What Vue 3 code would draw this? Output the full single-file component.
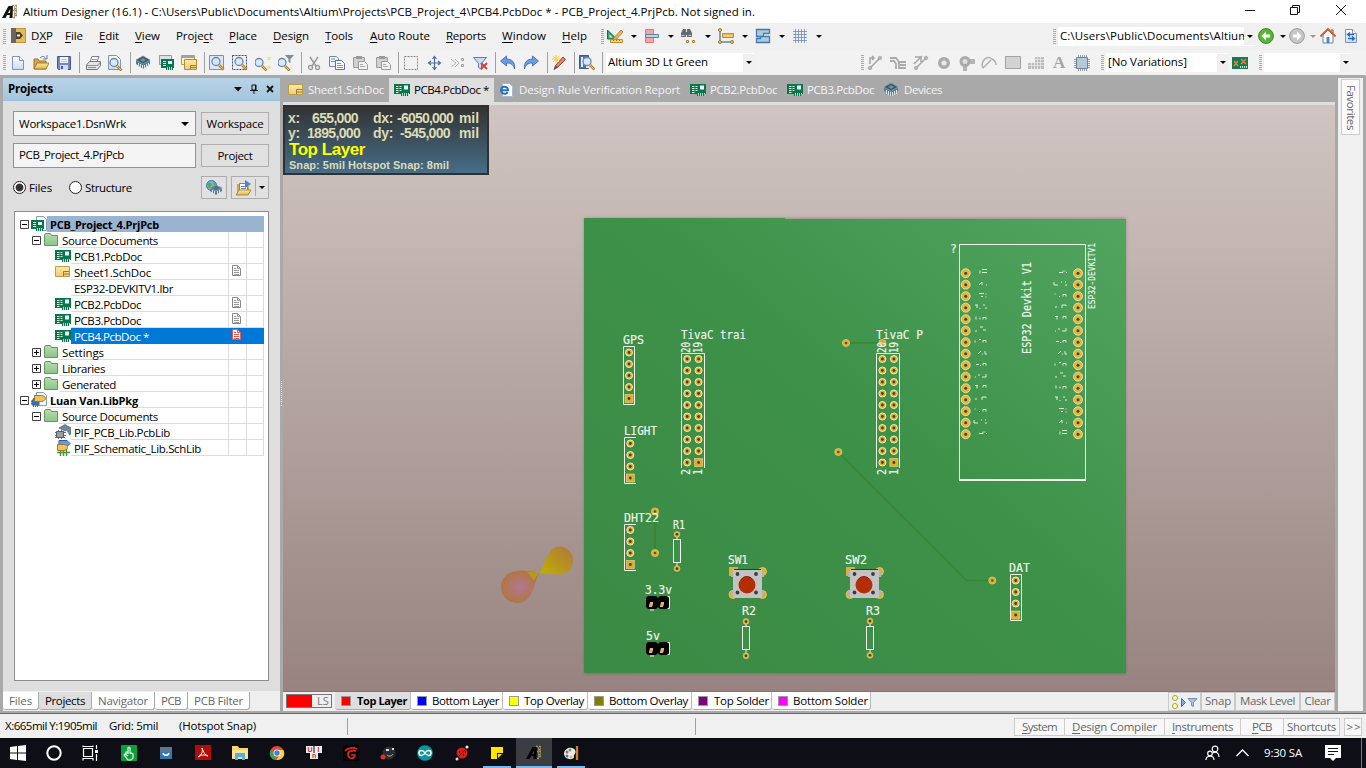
<script setup>
// Each bar lists its items by left edge; a slot is as wide as the distance to the next item.
const row = (items, end = 1366) => {
  const list = items[0].x > 0 ? [{ x: 0 }, ...items] : items
  return list.map((it, i) => ({ ...it, w: (i + 1 < list.length ? list[i + 1].x : end) - it.x, parts: split(it.t || '') }))
}
function split(t) {
  const i = t.indexOf('&')
  return i < 0 ? [t, '', ''] : [t.slice(0, i), t[i + 1], t.slice(i + 2)]
}
// Adjusts tracking so that a label takes its designed length along its writing direction.
const vFit = {
  mounted(el, { value, modifiers }) {
    if (!value) return
    const box = el.getBoundingClientRect()
    const natural = modifiers.vertical ? box.height : box.width
    el.style.letterSpacing = (value - natural) / el.textContent.length + 'px'
  }
}
const ic = (x, icon) => ({ x, icon })
const tx = (x, t, f) => ({ x, t, f })
const sep = x => ({ x, k: 'sep' })
const grip = x => ({ x, k: 'grip' })
const dd = (x, off) => ({ x, k: off ? 'dd off' : 'dd' })
const combo = (x, t, f, cw) => ({ x, k: 'combo', t, f, cw })

const menu = row([
  grip(3), ic(11, 'dxp'), tx(31, 'D&XP', 22), tx(65, '&File', 18), tx(99, '&Edit', 20), tx(135, '&View', 25), tx(176, 'Proje&ct', 37),
  tx(229, '&Place', 28), tx(273, '&Design', 36), tx(325, '&Tools', 28), tx(370, '&Auto Route', 60), tx(446, '&Reports', 40),
  tx(502, '&Window', 44), tx(562, '&Help', 25), grip(601), ic(607, 'draw'), dd(631), ic(644, 'align'), dd(668), ic(681, 'find'), dd(705),
  ic(718, 'dims'), dd(742), ic(755, 'room'), dd(779), ic(792, 'grid'), dd(816), grip(1053),
  combo(1058, 'C:\\Users\\Public\\Documents\\Altium', 189, 197), ic(1258, 'back'), dd(1280), ic(1289, 'fwd'), dd(1310, 1), ic(1320, 'home'), ic(1343, 'sync')
])
const tools = row([
  grip(3), ic(10, 'new'), ic(33, 'open'), ic(56, 'save'), sep(79), ic(85, 'print'), ic(107, 'preview'), sep(130), ic(135, 'chip'), ic(158, 'pcbfile'),
  ic(181, 'sheets'), sep(204), ic(209, 'zoomdoc'), ic(232, 'zoomarea'), ic(255, 'zoompts'), ic(278, 'zoomfilter'), sep(301), ic(306, 'cut'), ic(329, 'copy'),
  ic(352, 'paste'), ic(375, 'paste'), sep(398), ic(403, 'select'), ic(427, 'move'), ic(450, 'desel'), ic(473, 'clearf'), sep(495), ic(500, 'undo'),
  ic(523, 'redo'), sep(547), ic(551, 'wand'), sep(574), ic(579, 'browse'), sep(602), combo(606, 'Altium 3D Lt Green', 100, 148),
  grip(861), ic(867, 'route1'), ic(890, 'route2'), ic(913, 'route3'), ic(936, 'donut'), ic(959, 'via'), ic(981, 'arc'), ic(1005, 'fill'), ic(1028, 'poly'),
  ic(1051, 'bigA'), ic(1074, 'comp'), grip(1101), combo(1106, '[No Variations]', 79, 122), ic(1232, 'variant'), grip(1259), combo(1264, '', 0, 87)
])
const docTabs = [
  { w: 106, icon: 'sch', t: 'Sheet1.SchDoc', f: 76, pad: 5, gap: 4 },
  { w: 105, icon: 'pcb', t: 'PCB4.PcbDoc *', f: 75, pad: 5, gap: 4, on: true },
  { w: 191, icon: 'ie', t: 'Design Rule Verification Report', f: 161, pad: 5, gap: 4 },
  { w: 97, icon: 'pcb', t: 'PCB2.PcbDoc', f: 67, pad: 5, gap: 4 },
  { w: 97, icon: 'pcb', t: 'PCB3.PcbDoc', f: 67, pad: 5, gap: 4 },
  { w: 70, icon: 'chip', t: 'Devices', f: 38, pad: 4, gap: 5 }
]
const tree = [
  { l: 0, e: '-', icon: 'prj', t: 'PCB_Project_4.PrjPcb', f: 109, cls: 'project bold' },
  { l: 1, e: '-', icon: 'folder', t: 'Source Documents', f: 96 },
  { l: 2, icon: 'pcb', t: 'PCB1.PcbDoc', f: 68 },
  { l: 2, icon: 'sch', t: 'Sheet1.SchDoc', f: 77, d: 'doc' },
  { l: 2, t: 'ESP32-DEVKITV1.lbr', f: 99 },
  { l: 2, icon: 'pcb', t: 'PCB2.PcbDoc', f: 67, d: 'doc' },
  { l: 2, icon: 'pcb', t: 'PCB3.PcbDoc', f: 67, d: 'doc' },
  { l: 2, icon: 'pcb', t: 'PCB4.PcbDoc *', f: 75, d: 'docred', cls: 'picked' },
  { l: 1, e: '+', icon: 'folder', t: 'Settings', f: 42 },
  { l: 1, e: '+', icon: 'folder', t: 'Libraries', f: 43 },
  { l: 1, e: '+', icon: 'folder', t: 'Generated', f: 54 },
  { l: 0, e: '-', icon: 'lib', t: 'Luan Van.LibPkg', f: 88, cls: 'bold' },
  { l: 1, e: '-', icon: 'folder', t: 'Source Documents', f: 96 },
  { l: 2, icon: 'pcblib', t: 'PIF_PCB_Lib.PcbLib', f: 96 },
  { l: 2, icon: 'schlib', t: 'PIF_Schematic_Lib.SchLib', f: 127 }
]
const panelTabs = [
  { t: 'Files', w: 36, f: 23 }, { t: 'Projects', w: 53, f: 40, on: true }, { t: 'Navigator', w: 63, f: 50 },
  { t: 'PCB', w: 33, f: 20 }, { t: 'PCB Filter', w: 62, f: 49 }
]
const layers = [
  { t: 'Top Layer', c: '#f00', w: 76, f: 50, on: true, g: 6 }, { t: 'Bottom Layer', c: '#00f', w: 92, f: 67, g: 5 }, { t: 'Top Overlay', c: '#ff0', w: 85, f: 60, g: 5 },
  { t: 'Bottom Overlay', c: '#808000', w: 104, f: 79, g: 5 }, { t: 'Top Solder', c: '#800080', w: 80, f: 55, g: 6 }, { t: 'Bottom Solder', c: '#f0f', w: 99, f: 75, g: 5 }
]
const maskButtons = [{ t: 'Snap', w: 34, f: 26 }, { t: 'Mask Level', w: 65, f: 55 }, { t: 'Clear', w: 35, f: 26 }]
const status = row([tx(5, 'X:665mil Y:1905mil', 92), tx(109, 'Grid: 5mil', 49), tx(179, '(Hotspot Snap)', 77), sep(347), sep(695)], 1014)
const panels = [
  { t: '&System', w: 50, f: 35 }, { t: '&Design Compiler', w: 100, f: 85 }, { t: '&Instruments', w: 76, f: 61 }, { t: '&PCB', w: 43, f: 20 }, { t: 'Shortcuts', w: 57, f: 49 }
].map(p => ({ ...p, parts: split(p.t) }))
const hud1 = row([tx(3, 'x:', 12), tx(27, '655,000', 46), tx(88, 'dx:', 20), tx(112, '-6050,000', 56), tx(174, 'mil', 20)], 202)
const hud2 = row([tx(3, 'y:', 12), tx(22, '1895,000', 53), tx(88, 'dy:', 20), tx(115, '-545,000', 50), tx(174, 'mil', 20)], 202)
const tasks = ['win', 'cortana', 'taskview', 'hand', 'store', 'pdf', 'explorer', 'chrome', 'keys', 'garena', 'bomb', 'arduino', 'bug', 'sticky', 'altium', 'paint']

const P = 11.5
const col = (x, y, n, sq) => Array.from({ length: n }, (_, i) => ({ x, y: y + i * P, s: sq && i === n - 1 }))
const pins = [
  ...col(629, 352.5, 5, true), ...col(630.3, 443.5, 4, true), ...col(630.3, 530, 4, true), ...col(1015.7, 580.5, 4, true),
  ...col(687.2, 359, 10), ...col(698.6, 359, 10, true), ...col(882.4, 359, 10), ...col(893.9, 359, 10, true)
]
const vias = [[655, 511.5], [655, 553], [846, 343], [882.4, 343], [838.3, 452], [992.3, 580.5]]
const espRows = Array.from({ length: 15 }, (_, i) => 273.2 + i * P)
const resistors = [[677.3, 534.3], [746.3, 621.5], [870.3, 621]]
const silk = [
  ['GPS', 623, 343.5, 21], ['LIGHT', 624, 434.5, 33], ['DHT22', 624, 521.5, 35], ['R1', 673, 528.5, 12], ['3.3v', 645, 593.5, 27], ['5v', 646, 639.5, 14],
  ['TivaC trai', 681, 339, 65], ['TivaC P', 876, 339, 47], ['SW1', 728, 564, 20], ['SW2', 845, 564, 22], ['R2', 742, 615, 14], ['R3', 866, 614.5, 14], ['DAT', 1009, 572, 21]
]
const turned = [
  ['20', 690, 353, 11], ['19', 701.5, 353, 11], ['2', 690, 475, 6], ['1', 701.5, 475, 6],
  ['20', 886, 353, 11], ['19', 897.5, 353, 11], ['2', 886, 475, 6], ['1', 897.5, 475, 6],
  ['ESP32 Devkit V1', 1031, 354, 92]
]
const marksL = ['M980 271v3m2-4h5m-5 3h5', 'M979 274l3-3v3m4 0h1', 'M979 271h5m-3 3h2m3-3v1m0 2v1', 'M975 271h3m-1 0v3m3 0v1m3-4h2m0 3h2', 'M976 271v3m4 0v-2m3 2v-2h3v2',
  'M975 274h2m3-4h3m0 3h3', 'M975 272v2m4-3h2m2 3v-2h3v2', 'M978 274l3-3m1 3h1m2-3v3h2', 'M976 273h3m1 1h1m2 0v-2h3v2', 'M975 274h1m3-3v2m3 1h4v-3', 'M975 271h3m-1 0v3m6-1v-2h3v2',
  'M976 272v2m6 0v-3h4v1', 'M975 271v1m4 2h1m3 0v-2h3v2', 'M974 271v3h4m3-3h1m3 0h1m-1 3h2', 'M979 273h4v-2m2 0v1m1 1h1']
</script>

<template>
  <div class="app">
    <svg class="defs" width="0" height="0">
      <defs>
        <linearGradient id="gy" x2="0" y2="1"><stop stop-color="#fbe9a4" /><stop offset="1" stop-color="#e3b64b" /></linearGradient>
        <linearGradient id="gs" x2="0" y2="1"><stop stop-color="#fbe9a4" /><stop offset="1" stop-color="#f0cd72" /></linearGradient>
        <linearGradient id="gb" x2="0" y2="1"><stop stop-color="#fff" /><stop offset="1" stop-color="#c9dcf0" /></linearGradient>
        <linearGradient id="gg" x2="0" y2="1"><stop stop-color="#b6dcae" /><stop offset="1" stop-color="#8cc487" /></linearGradient>
        <symbol id="page" viewBox="0 0 16 16"><path d="M2.500 1.500h7l4 4v9h-11z" fill="url(#gb)" stroke="#7c94b8" /><path d="M9.500 1.500v4h4" fill="#fff" stroke="#7c94b8" /></symbol>
        <symbol id="lens" viewBox="0 0 16 16"><circle cx="7" cy="6.500" r="4" fill="#d5e9fb" stroke="#6b88a8" stroke-width="1.300" /><path d="M10 10l4.500 4.500" stroke="#b8812a" stroke-width="2.600" /><path d="M10 10l4 4" stroke="#f0c060" /></symbol>
        <symbol id="new" viewBox="0 0 16 16"><use href="#page" /></symbol>
        <symbol id="open" viewBox="0 0 16 16"><path d="M1 14V4h4l1 2h7v8z" fill="#d9a645" stroke="#a17628" /><path d="M1 14l3-6h12l-3 6z" fill="url(#gy)" stroke="#a97d2e" /><path d="M7 3c3-3 5-1 6 1m-3 0h4V0" fill="none" stroke="#68809a" /></symbol>
        <symbol id="save" viewBox="0 0 16 16"><path d="M1.500 1.500h13v13h-12l-1-1z" fill="#7287bd" stroke="#45588e" /><path d="M4 2h8v6H4z" fill="#f5f7fd" /><path d="M5 4.500h6m-6 2h6" stroke="#b8c3dd" /><path d="M4 10h8v5H4z" fill="#d5dced" /><path d="M5 11h2v3H5z" fill="#45588e" /></symbol>
        <symbol id="print" viewBox="0 0 16 16"><path d="M5 7l2-5.500h7L12 7" fill="#fff" stroke="#7b7f86" /><path d="M7 4.500h5" stroke="#999" /><path d="M1.500 10l3-3.500h11v4l-3 4h-11z" fill="#e3e5e8" stroke="#70757c" /><path d="M2 10.500h11l2-3M3 12.500h8" fill="none" stroke="#8b8f96" /></symbol>
        <symbol id="preview" viewBox="0 0 16 16"><path d="M1.500 .500h8l4 4v10h-12z" fill="url(#gb)" stroke="#7c94b8" /><use href="#lens" transform="translate(0 1)" /></symbol>
        <symbol id="chip" viewBox="0 0 16 16"><path d="M1 5l7-4 7 4v4l-7 5-7-5z" fill="#5e7c8c" /><path d="M1 5l7-4 7 4-7 4z" fill="#3d5668" stroke="#7fa1b5" stroke-width=".8" /><path d="M3.500 8v4m2-3v4m2-3v4m2-4v4m2-5v4m2-5v4" stroke="#d5e7e5" /><path d="M5 5l3-2 3 2-3 2z" fill="#6f90a5" /></symbol>
        <symbol id="pcb" viewBox="0 0 16 16"><path d="M0 2h16v10h-2v2H7v-2H0z" fill="#08764e" /><path d="M2 4.500h2.500m-2.500 2h2.500m-2.500 2h2.500m-2.500 2h2.500m1-6h2m-2 2h2m-2 2h2" stroke="#d5f3dd" /><path d="M10 3.500h4v4h-4z" fill="#e7fff2" /><path d="M8.500 11v3m2-3v3m2-3v3m2-3v1" stroke="#a6dfbc" /></symbol>
        <symbol id="pcbfile" viewBox="0 0 16 16"><path d="M1.500 .500h12v9h-12z" fill="#d7dfea" stroke="#8f9db0" /><path d="M3 4h13v9h-1v2H8v-2H3z" fill="#08764e" /><path d="M5 6.500h3m-3 2h3m-3 2h3" stroke="#d5f3dd" /><path d="M10 6h4v3h-4z" fill="#e7fff2" /><path d="M9.500 12v3m2-3v3m2-3v3" stroke="#a6dfbc" /></symbol>
        <symbol id="sch" viewBox="0 0 16 16"><path d="M.500 2.500h14v10h-14z" fill="url(#gs)" stroke="#bd9b4d" /><path d="M8.500 12V7.500H14m-5 2.500h5" fill="none" stroke="#9b7b31" /></symbol>
        <symbol id="sheets" viewBox="0 0 16 16"><path d="M.500 .500h13v9H.500z" fill="#fff0bd" stroke="#b89d58" /><path d="M1 1h12v2H1z" fill="#94a4ba" /><path d="M3.500 4.500h12v10h-12z" fill="url(#gs)" stroke="#b08c3b" /><path d="M9.500 14v-3.500H15m-5 2h5" fill="none" stroke="#9b7b31" /></symbol>
        <symbol id="zoomdoc" viewBox="0 0 16 16"><path d="M.500 .500h14v14H.500z" fill="#dbe8f6" stroke="#7590b5" /><use href="#lens" /></symbol>
        <symbol id="zoomarea" viewBox="0 0 16 16"><path d="M.500 .500h14v14H.500z" fill="none" stroke="#334f83" stroke-dasharray="2 1" /><use href="#lens" /></symbol>
        <symbol id="zoompts" viewBox="0 0 16 16"><use href="#lens" transform="translate(-3 1)" /><path d="M13 2.500h2v2h-2zM13 11h2v2h-2z" fill="#fff5a0" stroke="#d4cc74" stroke-width=".6" /></symbol>
        <symbol id="zoomfilter" viewBox="0 0 16 16"><use href="#lens" transform="translate(-3 1)" /><path d="M7 0h9l-3.500 4v4l-2-1V4z" fill="#858b92" /></symbol>
        <symbol id="cut" viewBox="0 0 16 16"><path d="M4 2l6 9m2-9l-6 9" stroke="#9b9b9b" stroke-width="1.500" /><circle cx="4.500" cy="12.500" r="2" fill="none" stroke="#999" stroke-width="1.300" /><circle cx="11.500" cy="12.500" r="2" fill="none" stroke="#999" stroke-width="1.300" /></symbol>
        <symbol id="copy" viewBox="0 0 16 16"><path d="M.500 1.500h7l2 2v8h-9z" fill="#edf3fb" stroke="#7188b0" /><path d="M6.500 5.500h6l3 3v6h-9z" fill="#fff" stroke="#5974a4" /><path d="M2 4h4M2 6.500h4M8 8.500h4m-4 2h6m-6 2h6" stroke="#7a91b8" /></symbol>
        <symbol id="paste" viewBox="0 0 16 16"><path d="M1.500 2.500h11v10h-11z" fill="#d1d1d1" stroke="#9c9c9c" /><path d="M4 1h6v3H4z" fill="#999" /><path d="M6.500 6.500h6l3 3v5h-9z" fill="#f1f1f1" stroke="#999" /><path d="M8 9.500h3m-3 2h5" stroke="#aaa" /></symbol>
        <symbol id="select" viewBox="0 0 16 16"><path d="M1.500 1.500h13v13h-13z" fill="none" stroke="#888" stroke-dasharray="2 1" /></symbol>
        <symbol id="move" viewBox="0 0 16 16"><path d="M7.500 2v12m-6-6h12M5.500 4l2-2.500 2 2.500m-4 8l2 2.500 2-2.500M4 6L1.500 8 4 10m7-4l2.500 2-2.500 2" fill="none" stroke="#506da3" stroke-width="1.200" /></symbol>
        <symbol id="desel" viewBox="0 0 16 16"><path d="M1 4l5 4-5 4M5 4l4 4-4 4" fill="none" stroke="#a6a6a6" stroke-dasharray="2 .5" /><path d="M11.500 3.500h2v2h-2zm0 6h2v2h-2z" fill="none" stroke="#a3a3a3" /></symbol>
        <symbol id="clearf" viewBox="0 0 16 16"><path d="M.500 2.500h13l-5 6v6l-3-2v-4z" fill="#c7dcf2" stroke="#5680b0" /><path d="M8 8l6 6m0-6l-6 6" stroke="#d14334" stroke-width="2" /></symbol>
        <symbol id="undo" viewBox="0 0 16 16"><path d="M.500 6l6-5v3c5 0 9 3 8 10-1-4-3-6-8-6v3z" fill="#6e9bdb" stroke="#3565a8" stroke-width=".8" /></symbol>
        <symbol id="redo" viewBox="0 0 16 16"><use href="#undo" transform="translate(16 0) scale(-1 1)" /></symbol>
        <symbol id="wand" viewBox="0 0 16 16"><path d="M3 14.500l1.500-4L12 2l2.500 2.500L7 12z" fill="#eb8067" stroke="#9e4030" /><path d="M3 14.500l1.500-4L7 12z" fill="#555" /><path d="M5 0v8M1 4h8M2 1l6 6m0-6L2 7" stroke="#f4ce31" /></symbol>
        <symbol id="browse" viewBox="0 0 16 16"><path d="M.500 .500h9v13h-9z" fill="#5175a5" stroke="#3c5b83" /><path d="M2 2h2v10H2zM7 2h6v11H7z" fill="#e2ecf6" /><use href="#lens" transform="translate(1 0)" /></symbol>
        <symbol id="dxp" viewBox="0 0 16 16"><path d="M.500 .500h14v14H.500z" fill="#e6bc55" stroke="#c09541" /><path d="M0 0h5v15H0z" fill="#6b6659" /><path d="M5 4h4l3 3.500L9 11H5z" fill="#4a4234" /><path d="M6 7.500h3" stroke="#fff2bd" stroke-width="2" /></symbol>
        <symbol id="draw" viewBox="0 0 16 16"><path d="M.500 2v9h9z" fill="#3fa373" stroke="#117146" /><path d="M2.500 6.500v3h3z" fill="#eaf7ef" /><path d="M5 12l9-10 2 2-8 9z" fill="#e7b54e" stroke="#98702f" stroke-width=".7" /><path d="M3.500 11.500h12v3h-12z" fill="#f7d37a" stroke="#c08d2b" /><path d="M6.500 12v1m3-1v1m3-1v1" stroke="#916817" /></symbol>
        <symbol id="align" viewBox="0 0 16 16"><path d="M1.500 1.500h8v5h-8zm0 8h8v5h-8z" fill="#f7a5a1" stroke="#e07773" /><path d="M1.500 6.500h13v3h-13z" fill="#b6d4ee" stroke="#5980a8" /></symbol>
        <symbol id="find" viewBox="0 0 16 16"><path d="M0 9V5l2-4h3v8zm6 0V1h3l2 4v4zM4 4h3v3H4z" fill="#626a75" /><path d="M.500 7.500h3m4 0h3" stroke="#c6cbd2" /><path d="M5.500 12.500h2v2h-2zm6 0h2v2h-2z" fill="#ffe996" stroke="#a9842b" /></symbol>
        <symbol id="dims" viewBox="0 0 16 16"><path d="M2 2v12h12" fill="none" stroke="#66839c" stroke-width="1.500" /><circle cx="2" cy="2" r="1.500" fill="#f4d678" stroke="#9b7428" /><circle cx="2" cy="14" r="1.500" fill="#f4d678" stroke="#9b7428" /><circle cx="14" cy="14" r="1.500" fill="#f4d678" stroke="#9b7428" /><path d="M4.500 5.500h11v4h-11z" fill="#efbd57" stroke="#c28732" /><path d="M7 7v2m3-2v2m3-2v2" stroke="#fff0b5" /></symbol>
        <symbol id="room" viewBox="0 0 16 16"><path d="M1.500 1.500h13v4h-6v3h-7zm0 7m0 2h4v-2h9v6h-13z" fill="#a8cce5" stroke="#447aa4" stroke-width="1.300" /></symbol>
        <symbol id="grid" viewBox="0 0 16 16"><path d="M3.500 1v14m3-14v14m3-14v14m3-14v14M1 3.500h14M1 6.500h14M1 9.500h14M1 12.500h14" stroke="#7795bb" stroke-width=".9" /></symbol>
        <symbol id="back" viewBox="0 0 16 16"><circle cx="8" cy="8" r="7.400" fill="#55b936" stroke="#3c8627" /><path d="M8 3.500L3.500 8 8 12.500v-3h4v-3H8z" fill="#fff" /></symbol>
        <symbol id="fwd" viewBox="0 0 16 16"><circle cx="8" cy="8" r="7.400" fill="#c6c6c6" stroke="#9a9a9a" /><path d="M8 3.500L12.500 8 8 12.500v-3H4v-3h4z" fill="#fff" /></symbol>
        <symbol id="home" viewBox="0 0 16 16"><path d="M3 7v8h10V7L8 2z" fill="#fff" stroke="#6785aa" /><path d="M6.500 9h3v6h-3z" fill="#4288db" /><path d="M.500 8.500L8 1l7.500 7.500" fill="none" stroke="#d1602d" stroke-width="2" /><path d="M11 2h2v3" stroke="#965033" fill="none" /></symbol>
        <symbol id="sync" viewBox="0 0 16 16"><use href="#page" /><path d="M5 6.500h6M7 4.500l-2.500 2L7 8.500M11 10.500H5m4-2l2.500 2-2.500 2" fill="none" stroke="#2566c0" stroke-width="1.300" /></symbol>
        <symbol id="route1" viewBox="0 0 16 16"><path d="M3 13L13 3M3 9V3h4m-2-2l2 2-2 2" fill="none" stroke="#a5a5a5" stroke-width="1.500" /><circle cx="3" cy="13" r="1.800" fill="#b5b5b5" stroke="#999" stroke-width=".5" /><circle cx="13" cy="3" r="1.800" fill="#b5b5b5" stroke="#999" stroke-width=".5" /></symbol>
        <symbol id="route2" viewBox="0 0 16 16"><path d="M0 3h6l3 4v7M0 6h4l2 3v5m2-7l2 3h6m-7 3h7m-7-6h7" fill="none" stroke="#aaa" stroke-width="1.800" /></symbol>
        <symbol id="route3" viewBox="0 0 16 16"><path d="M3 13L14 2M1 9L9 1M2 2h6v5" fill="none" stroke="#a7a7a7" stroke-width="1.500" /><circle cx="3" cy="13" r="1.800" fill="#b5b5b5" stroke="#999" stroke-width=".5" /><circle cx="13" cy="3" r="1.800" fill="#b5b5b5" stroke="#999" stroke-width=".5" /></symbol>
        <symbol id="donut" viewBox="0 0 16 16"><circle cx="8" cy="8" r="4.300" fill="#e8e8e8" stroke="#aaa" stroke-width="3.400" /></symbol>
        <symbol id="via" viewBox="0 0 16 16"><path d="M4 10h4v6H4zm5-6h7v5H9z" fill="#b5b5b5" /><circle cx="6" cy="6.500" r="4" fill="#ddd" stroke="#aaa" stroke-width="3" /></symbol>
        <symbol id="arc" viewBox="0 0 16 16"><path d="M2 13C-1 6 6 0 11 4c2 1 4 3 4 6M2 13l8-8" fill="none" stroke="#b0b0b0" stroke-width="1.500" /></symbol>
        <symbol id="fill" viewBox="0 0 16 16"><path d="M.500 1.500h15v12H.500z" fill="#d3d3d3" stroke="#a3a3a3" /></symbol>
        <symbol id="poly" viewBox="0 0 16 16"><path d="M7 2h9v12H0V8h7z" fill="#bdbdbd" /><path d="M3.500 8v6m3-6v6m3-12v12m3-12v12M7 4.500h9M0 7.500h16M0 10.500h16" stroke="#eee" stroke-width=".7" /></symbol>
        <symbol id="comp" viewBox="0 0 16 16"><path d="M4.500 0v16m2-16v16m2-16v16m2-16v16m2-16v16M0 4.500h16M0 6.500h16M0 8.500h16M0 10.500h16M0 12.500h16" stroke="#8796a3" stroke-width=".9" /><path d="M2.500 2.500h11v11h-11z" fill="#b4cada" stroke="#6f8595" /></symbol>
        <symbol id="variant" viewBox="0 0 16 16"><path d="M0 2h16v12H0z" fill="#127a56" /><path d="M2 6l4 5m0-5l-4 5m7-7l5 5m0-5L9 9" stroke="#e68234" stroke-width="1.500" /><path d="M8.500 11v2m2-2v2m2-2v2m2-2v2" stroke="#d3e7bf" /></symbol>
        <symbol id="ie" viewBox="0 0 16 16"><path d="M3.500 1.500h7l3 3v10h-10z" fill="#fff" stroke="#a5bad0" /><path d="M8.700 10c-1 2-3.500 2.300-5.200 1C1 9 2 5 5 4.700c2.500-.2 4 1.300 4 3.600H2.500" fill="none" stroke="#2471cc" stroke-width="2" /></symbol>
        <symbol id="folder" viewBox="0 0 16 16"><path d="M1.500 13.500V3l1-1.500h5l1 2h6v10z" fill="url(#gg)" stroke="#61965f" /></symbol>
        <symbol id="prj" viewBox="0 0 16 16"><path d="M5.500 .500h7l3 3v11h-10z" fill="#f5f8fd" stroke="#8b9bb8" /><path d="M0 4h13v9h-1v2H5v-2H0z" fill="#08764e" /><path d="M2 6.500h3m-3 2h3m-3 2h3" stroke="#d5f3dd" /><path d="M7 6h4v3H7z" fill="#e7fff2" /><path d="M6.500 12v3m2-3v3m2-3v3" stroke="#a6dfbc" /></symbol>
        <symbol id="lib" viewBox="0 0 16 16"><path d="M5.500 .500h7l3 3v10h-10z" fill="#f5f8fd" stroke="#8b9bb8" /><path d="M1 8h7v5H1zM2.500 6v9m2-9v9m2-9v9M0 9.500h8M0 11.500h8" fill="#3a6db0" stroke="#3a6db0" /><path d="M3.500 3.500h7c3 0 4 2 4 3s-2 3-4 3h-7z" fill="#efc45d" stroke="#9b7737" /></symbol>
        <symbol id="pcblib" viewBox="0 0 16 16"><path d="M4 4l6-3.500L16 4l-6 3zM12 7l4-2v5l-2 1" fill="#6f879b" stroke="#4c6376" stroke-width=".7" /><path d="M3.500 6v9m3-9v9M0 8.500h11M0 11.500h11M0 13.500h10" stroke="#646b72" /><path d="M1.500 7.500h7v6h-7z" fill="#969ea6" stroke="#555c63" /></symbol>
        <symbol id="schlib" viewBox="0 0 16 16"><path d="M4 .500h8l3 3-3 3H4z" fill="#629ee0" stroke="#2c5da5" /><path d="M5.500 8v8m3-8v8m3-8v8M2 12.500h13" stroke="#4a963c" stroke-width="1.500" /><path d="M2.500 4.500h6c3 0 4 1.500 4 3s-2 3-4 3h-6z" fill="#efc45d" stroke="#9b7737" /></symbol>
        <symbol id="doc" viewBox="0 0 16 16"><path d="M3.500 1.500h5l3 3v7h-8z" fill="#fff" stroke="#888" /><path d="M8.500 1.500v3h3M5 4.500h2M5 6.500h5m-5 2h5m-5 2h5" fill="none" stroke="#999" /></symbol>
        <symbol id="docred" viewBox="0 0 16 16"><path d="M3.500 1.500h5l3 3v7h-8z" fill="#fff" stroke="#e55953" /><path d="M8.500 1.500v3h3M5 4.500h2M5 6.500h5m-5 2h5m-5 2h5" fill="none" stroke="#e55953" /></symbol>
        <symbol id="globe" viewBox="0 0 16 16"><circle cx="5.500" cy="5.500" r="5" fill="#76b7e8" stroke="#34739f" /><path d="M1 4c3-3 4-1 5 1-2 3-2 4-4 2zm6-3l3 3-2 3z" fill="#5cab49" /><path d="M4 8l6-3 6 3v3l-6 4-6-4z" fill="#5e7c8c" /><path d="M4 8l6-3 6 3-6 3z" fill="#54728a" stroke="#8fb0c5" stroke-width=".7" /><path d="M6.500 10v3m2-2v4m3-4v4m2-5v3" stroke="#d5e7e5" /></symbol>
        <symbol id="openprj" viewBox="0 0 16 16"><path d="M1 14V4h4l1 2h7v8z" fill="#d9a645" /><path d="M3.500 3.500h8v9h-8z" fill="#fff" stroke="#6487b6" /><path d="M5 6.500h5m-5 2h5" stroke="#6487b6" /><path d="M9 0l6 4-6 4z" fill="#4784df" /><path d="M0 15l3-5h12l-3 5z" fill="url(#gy)" stroke="#b28535" /></symbol>
        <symbol id="altium" viewBox="0 0 16 16"><path d="M0 14L6.500 2H11l-.5 12H7.500l.2-3H5L3.500 14zM6 9h2l.3-4z" fill="currentColor" fill-rule="evenodd" /><path d="M10 1.500h2m1 0h2M12 4.500h2m-3 2h1m1 0h2m-3 3h2m-1 2h2m-4 2h2" stroke="#a2905e" stroke-width="1.300" /><path d="M12.500 2v11m2-11v9" stroke="#a2905e" stroke-width=".7" /></symbol>
        <symbol id="win" viewBox="0 0 16 16"><path d="M0 2l7-1v6.500H0zm8-1l8-1v7.500H8zM0 8.500h7V15l-7-1zm8 0h8V16l-8-1z" fill="#fff" /></symbol>
        <symbol id="cortana" viewBox="0 0 16 16"><circle cx="8" cy="8" r="6.700" fill="none" stroke="#fff" stroke-width="2" /></symbol>
        <symbol id="taskview" viewBox="0 0 16 16"><path d="M1.500 3.500h9v8h-9zM1 .500v1h10v-1M1 15.500v-2h10v2M14.500 0v4m0 5v7" fill="none" stroke="#fff" stroke-width="1.200" /><path d="M13 5h3v3h-3z" fill="#fff" /></symbol>
        <symbol id="hand" viewBox="0 0 16 16"><rect width="16" height="16" rx="1" fill="#0aa039" /><path d="M7 9V3c0-1 2-1 2 0v5l3 1v4l-2 2H7l-4-5 1-1 3 2M5 9V7h2m2 1h2" fill="none" stroke="#fff" stroke-width="1.100" /></symbol>
        <symbol id="store" viewBox="0 0 16 16"><path d="M2 2h12v12H2z" fill="#3477ac" /><path d="M2 2h12v5H2z" fill="#5b7890" /><path d="M5 8c1 3 5 3 6 0" fill="none" stroke="#fff" stroke-width="1.700" /></symbol>
        <symbol id="pdf" viewBox="0 0 16 16"><path d="M0 0h16v15H0z" fill="#b20c0b" /><path d="M3 12C7 10 8 6 7 3c2 5 3 7 6 8-4-2-7-1-10 1z" fill="none" stroke="#fff" /></symbol>
        <symbol id="explorer" viewBox="0 0 16 16"><path d="M0 1h6l1 2h9v11H0z" fill="#f9d46a" /><path d="M0 5h16v9H0z" fill="#ffe391" /><path d="M3 8h10v7h-3v-3H6v3H3z" fill="#4ab4e8" /></symbol>
        <symbol id="chrome" viewBox="0 0 16 16"><circle cx="8" cy="8" r="7" fill="#e3493b" /><path d="M2 4.500L7.500 15C1.500 15-1 9 2 4.500z" fill="#30a856" /><path d="M8 5h6.300c3 5-1 10-7 10L11 9z" fill="#fbd12f" /><circle cx="8" cy="8" r="3.500" fill="#fff" /><circle cx="8" cy="8" r="2.700" fill="#397ee5" /></symbol>
        <symbol id="keys" viewBox="0 0 16 16"><path d="M0 1h7.500v7H0zm8.500 0H16v7H8.500zM4 8h8v6H4z" fill="#ececec" /></symbol>
        <symbol id="garena" viewBox="0 0 16 16"><path d="M0 0h16v16H0z" fill="#060607" /><path d="M2 6c2-3 8-4 12-2M5 10c-1-4 5-5 8-4M5 9c0 5 6 6 7 1H8" fill="none" stroke="#d82822" stroke-width="1.700" /></symbol>
        <symbol id="bomb" viewBox="0 0 16 16"><circle cx="9" cy="8" r="6.500" fill="#2d2d30" /><path d="M6 5h3m3-1h2" stroke="#ddd" stroke-width="2" /><circle cx="3" cy="12" r="2.500" fill="#db3425" /><path d="M7 10c2 2 5 1 6-1" stroke="#b8b8b8" fill="none" /></symbol>
        <symbol id="arduino" viewBox="0 0 16 16"><circle cx="8" cy="8" r="7.800" fill="#08979d" /><path d="M8 8C6 4.500 2 5 2 8s4 3.500 6 0c2-3.500 6-3 6 0s-4 3.500-6 0" fill="none" stroke="#fff" stroke-width="1.500" /></symbol>
        <symbol id="bug" viewBox="0 0 16 16"><circle cx="8" cy="8" r="5.500" fill="#d91f1a" /><path d="M3 13L13 3" stroke="#7b1010" /><path d="M5 7h1m3 3h1m1-3h1" stroke="#520b0b" stroke-width="1.500" /><circle cx="13" cy="2" r="1.500" fill="#eee" /><circle cx="3" cy="14" r="1.500" fill="#ddd" /></symbol>
        <symbol id="sticky" viewBox="0 0 16 16"><path d="M2 2h12v12H2z" fill="#ffe600" /><path d="M8 8h6v6H8z" fill="#111" /><path d="M9 13V9h4z" fill="#ffe600" /><path d="M8 14h0l6-6v0z" /></symbol>
        <symbol id="paint" viewBox="0 0 16 16"><path d="M1 8c1-5 8-7 11-3 2 4-2 4-1 7 0 3-10 4-10-4z" fill="#e7f0f6" /><circle cx="4" cy="7" r="1.500" fill="#e94c37" /><circle cx="7" cy="5" r="1.500" fill="#46af4d" /><circle cx="4" cy="11" r="1.500" fill="#367fd0" /><circle cx="8" cy="12" r="1.500" fill="#edbc34" /><path d="M14 1v14" stroke="#d47c33" stroke-width="2.300" /></symbol>
      </defs>
    </svg>

    <header class="title">
      <svg class="logo"><use href="#altium" /></svg>
      <span v-fit="732">Altium Designer (16.1) - C:\Users\Public\Documents\Altium\Projects\PCB_Project_4\PCB4.PcbDoc * - PCB_Project_4.PrjPcb. Not signed in.</span>
      <svg class="wincontrols" width="106" height="14" fill="none" stroke="#111"><path d="M0 7.500h10M45.500 4.500h7v7h-7zM47.500 4V2.500h7v7H53M91 2l10 10m0-10L91 12" /></svg>
    </header>

    <div v-for="(bar, b) in [menu, tools]" :key="b" class="bar" :class="b ? 'tools' : 'menu'">
      <div v-for="it in bar" :key="it.x" class="slot" :style="{ width: it.w + 'px' }">
        <span v-if="it.icon === 'bigA'" class="biga">A</span>
        <svg v-else-if="it.icon" class="icon"><use :href="'#' + it.icon" /></svg>
        <div v-else-if="it.k === 'combo'" class="combo" :style="{ width: it.cw + 'px' }"><span class="clip"><span v-fit="it.f">{{ it.t }}</span></span><i class="arrow"><b class="tri"></b></i></div>
        <b v-else-if="it.k" :class="it.k" class="mark"></b>
        <span v-else-if="it.t" v-fit="it.f">{{ it.parts[0] }}<u>{{ it.parts[1] }}</u>{{ it.parts[2] }}</span>
      </div>
    </div>

    <main class="work">
      <aside class="panel">
        <div class="phead"><b v-fit="45">Projects</b><svg width="45" height="12"><path d="M1 4h8l-4 4.500z" fill="#111" /><path d="M19 2h4v5h-4zm-2 5.500h8M21 7v4" fill="none" stroke="#111" /><path d="M22.500 2v5" stroke="#111" /><path d="M34 3l6 6m0-6l-6 6" stroke="#111" stroke-width="1.800" /></svg></div>
        <div class="pbody">
          <div class="field-row"><div class="field"><span v-fit="107">Workspace1.DsnWrk</span><b class="tri big"></b></div><div class="btn"><span v-fit="57">Workspace</span></div></div>
          <div class="field-row second"><div class="field"><span v-fit="105">PCB_Project_4.PrjPcb</span></div><div class="btn"><span v-fit="35">Project</span></div></div>
          <div class="radios">
            <i class="radio on"></i><span v-fit="23">Files</span><i class="radio r2"></i><span v-fit="47">Structure</span>
            <div class="btn ib"><svg class="icon"><use href="#globe" /></svg></div>
            <div class="btn ib2"><svg class="icon"><use href="#openprj" /></svg><i class="vline"></i><b class="tri"></b></div>
          </div>
          <div class="tree">
            <div v-for="(n, i) in tree" :key="i" class="node" :class="['l' + n.l, n.cls]">
              <i v-if="n.e" class="exp"><svg width="9" height="9"><path d="M.500 .500h8v8h-8z" fill="#fff" stroke="#444" /><path :d="n.e === '+' ? 'M2 4.500h5M4.500 2v5' : 'M2 4.500h5'" stroke="#000" /></svg></i>
              <svg class="icon"><use v-if="n.icon" :href="'#' + n.icon" /></svg>
              <div class="cell"><span v-fit="n.f">{{ n.t }}</span></div>
              <div class="c1"><svg v-if="n.d" class="icon"><use :href="'#' + n.d" /></svg></div><div class="c2"></div>
            </div>
          </div>
        </div>
        <div class="ptabs"><div v-for="t in panelTabs" :key="t.t" class="btab" :class="{ on: t.on }" :style="{ width: t.w + 'px' }"><span v-fit="t.f">{{ t.t }}</span></div></div>
      </aside>
      <div class="splitter"><i class="dots"></i></div>

      <section class="docs">
        <div class="dtabs"><div v-for="(t, i) in docTabs" :key="i" class="dtab" :class="{ on: t.on }" :style="{ width: t.w + 'px', paddingLeft: t.pad + 'px', gap: t.gap + 'px' }"><svg class="icon"><use :href="'#' + t.icon" /></svg><span v-fit="t.f">{{ t.t }}</span></div></div>
        <div class="canvas">
          <svg class="board" viewBox="283 105 1052 586" width="1052" height="586">
            <defs>
              <linearGradient id="pcbg" x1="0" y1="1" x2="1" y2="0"><stop stop-color="#3b8a45" /><stop offset=".55" stop-color="#3e9149" /><stop offset="1" stop-color="#51a55f" /></linearGradient>
              <radialGradient id="blobA"><stop stop-color="#ae7895" /><stop offset="1" stop-color="#b2763f" /></radialGradient>
              <linearGradient id="blobB" x1="0" y1="1" x2="1" y2="0"><stop stop-color="#bdb000" /><stop offset="1" stop-color="#b2763f" /></linearGradient>
              <filter id="shade" x="-5%" y="-5%" width="110%" height="110%"><feGaussianBlur stdDeviation="1.500" /></filter>
            </defs>
            <path d="M584 218h542v456H584z" fill="#5c4846" opacity=".4" filter="url(#shade)" />
            <path d="M584 218h201v1h341v454H584z" fill="url(#pcbg)" />
            <path d="M539 573.500C534 581 534 603 517 603a16 16 0 0 1 0-32c8-1 15 0 22 2z" fill="url(#blobA)" />
            <path d="M527 571.500l12 1-5 8z" fill="#b9a514" opacity=".75" />
            <path d="M540 573.500c5-10 8-27 19-27a14 14 0 0 1 0 28c-7 0-13-2-19-1z" fill="url(#blobB)" />
            <g fill="none" stroke="#3a8432" stroke-width="1.700"><path d="M655 512v41M846 343h36M838 452l128.500 128.500h26" /></g>
            <g fill="none" stroke="#f1f5ec">
              <path d="M623.500 346.500h11v58h-11zM636 437.500h-11.500v46H636M636 524.500h-11.500v46H636M681.500 468V353.500h23V468M876.500 468V353.500h23V468M1010.500 574.500h11v46h-11zM959.500 480V244.500h126V480" />
              <path d="M959 480h127" stroke-width="2" />
            </g>
            <g v-for="(p, i) in pins" :key="'p' + i">
              <rect v-if="p.s" :x="p.x - 4" :y="p.y - 4" width="8" height="8" fill="#dfae31" stroke="#eed689" stroke-width=".6" />
              <circle v-else :cx="p.x" :cy="p.y" r="3.500" fill="#dfae31" stroke="#f5ebb5" stroke-width="1" />
              <circle :cx="p.x" :cy="p.y" r="1.400" fill="#423b30" />
            </g>
            <g v-for="(v, i) in vias" :key="'v' + i"><circle :cx="v[0]" :cy="v[1]" r="3.600" fill="#dfae31" stroke="#f0d276" stroke-width=".6" /><circle :cx="v[0]" :cy="v[1]" r="1.300" fill="#5b5130" /></g>
            <g v-for="(y, i) in espRows" :key="'e' + i">
              <g v-for="x in [965.7, 1078]" :key="x"><circle :cx="x" :cy="y" r="4.500" fill="#e4b63b" stroke="#f7e9a8" stroke-width=".8" /><circle :cx="x" :cy="y" r="1.500" fill="#454149" /></g>
              <g fill="none" stroke="#eaf7e6" stroke-width=".9"><path :d="marksL[i]" :transform="`translate(0 ${i * P - 0.500})`" /><path :d="marksL[14 - i]" :transform="`translate(80 ${i * P - 0.500})`" /></g>
            </g>
            <g v-for="(r, i) in resistors" :key="'r' + i"><path :d="`M${Math.floor(r[0])} ${r[1]}v34`" stroke="#edf3e8" /><rect :x="Math.floor(r[0]) - 3.500" :y="Math.floor(r[1]) + 5.500" width="7" height="23" fill="#3e9048" stroke="#f1f5ec" /><g v-for="d in [0, 34.300]" :key="d"><circle :cx="r[0] - 0.300" :cy="r[1] + d" r="2.900" fill="#dfae31" stroke="#eed788" stroke-width=".5" /><circle :cx="r[0] - 0.300" :cy="r[1] + d" r="1.300" fill="#403a30" /></g></g>
            <g v-for="x in [0, 117]" :key="'s' + x" :transform="`translate(${x} 0)`">
              <path d="M729 567h9v9h-9z" fill="#dfae31" /><g fill="#dfae31" stroke="#f2dc90" stroke-width=".6"><circle cx="762.500" cy="571.500" r="4" /><circle cx="733" cy="594.500" r="4" /><circle cx="762.500" cy="594.500" r="4" /></g>
              <path d="M731 571h33v6h-33zm0 19h33v6h-33z" fill="#b2b2b0" /><path d="M733 569.500h29V598h-29z" fill="#c3c3c3" /><path d="M734 569.500h27" stroke="#2c3a2e" />
              <g fill="#3c3c3c"><circle cx="737.500" cy="574" r="1.900" /><circle cx="756" cy="574" r="1.900" /><circle cx="737.500" cy="592.500" r="1.900" /><circle cx="756" cy="592.500" r="1.900" /></g>
              <circle cx="747" cy="585" r="8.500" fill="#b32d05" /><path d="M741 580c3-5 9-4 11-1" stroke="#7e2207" fill="none" />
            </g>
            <g v-for="y in [0, 46]" :key="'j' + y" :transform="`translate(0 ${y})`"><path d="M666 596.500h3.500v12H666M650 610h4" fill="none" stroke="#f1f5ec" /><path d="M648 596h8l2 2 2-2h7l2 2v9l-2 2h-7l-2-2-2 2h-8l-2-2v-9z" fill="#000" /><path d="M649 606l1-4h3v2l-1 3h-3zm11 0l1-4h3v2l-1 3h-3z" fill="#dcb56d" /></g>
            <g class="silk">
              <text v-for="s in silk" :key="s[0]" :x="s[1]" :y="s[2]" :textLength="s[3]" lengthAdjust="spacingAndGlyphs">{{ s[0] }}</text>
              <text v-for="(s, i) in turned" :key="'t' + i" :transform="`translate(${s[1]} ${s[2]}) rotate(-90)`" :textLength="s[3]" lengthAdjust="spacingAndGlyphs">{{ s[0] }}</text>
              <text class="thin" transform="translate(1095 309) rotate(-90)" textLength="66" lengthAdjust="spacingAndGlyphs">ESP32-DEVKITV1</text>
              <text x="950" y="253">?</text>
            </g>
          </svg>
          <div class="hud">
            <div v-for="(h, i) in [hud1, hud2]" :key="i" class="hline"><div v-for="it in h" :key="it.x" class="slot" :style="{ width: it.w + 'px' }"><span v-if="it.t" v-fit="it.f">{{ it.t }}</span></div></div>
            <div class="hlayer"><span v-fit="76">Top Layer</span></div>
            <div class="hsnap"><span v-fit="160">Snap: 5mil Hotspot Snap: 8mil</span></div>
          </div>
        </div>
        <div class="layers">
          <div class="ls"><i></i><span v-fit="12">LS</span></div>
          <div v-for="l in layers" :key="l.t" class="btab layer" :class="{ on: l.on }" :style="{ width: l.w + 'px', gap: l.g + 'px' }"><i class="swatch" :style="{ background: l.c }"></i><span v-fit="l.f">{{ l.t }}</span></div>
          <div class="mask first"><svg width="28" height="16"><circle cx="4" cy="4" r="2.500" fill="#ffffb0" stroke="#a8a529" /><circle cx="4" cy="12" r="2.500" fill="#ffffb0" stroke="#a8a529" /><path d="M10.500 4.500l4 4-4 4z" fill="#75aeea" stroke="#3674b7" /><path d="M17 4.500h9l-3.500 4v4l-2-1V8.500z" fill="#aac4e2" stroke="#6f8fba" /></svg></div>
          <div v-for="m in maskButtons" :key="m.t" class="mask" :style="{ width: m.w + 'px' }"><span v-fit="m.f">{{ m.t }}</span></div>
        </div>
      </section>
      <div class="side"><div class="fav"><span v-fit.vertical="45">Favorites</span></div></div>
    </main>

    <div class="status">
      <div v-for="it in status" :key="it.x" class="slot" :style="{ width: it.w + 'px' }"><b v-if="it.k" class="sep mark"></b><span v-else-if="it.t" v-fit="it.f">{{ it.t }}</span></div>
      <div v-for="p in panels" :key="p.t" class="sbtn" :style="{ width: p.w + 'px' }"><span v-fit="p.f">{{ p.parts[0] }}<u>{{ p.parts[1] }}</u>{{ p.parts[2] }}</span></div>
      <div class="sbtn more"><span v-fit="13">&gt; &gt;</span></div>
    </div>

    <footer class="taskbar">
      <div v-for="(t, i) in tasks" :key="t" class="task" :class="{ run: i > 12, active: t === 'altium' }"><svg class="icon"><use :href="'#' + t" /><g v-if="t === 'keys'" class="keycap"><text x="1.500" y="7">U</text><text x="11.500" y="7">I</text><text x="6" y="13">n</text></g></svg></div>
      <div class="tray">
        <svg width="15" height="16" fill="none" stroke="#fff" stroke-width="1.200"><circle cx="10" cy="4" r="2.800" /><path d="M8 8c3-2 6 0 6 4" /><circle cx="5" cy="8.500" r="2.300" /><path d="M1 15c0-5 8-5 8 0" /></svg>
        <svg class="chev" width="13" height="8" fill="none" stroke="#fff" stroke-width="1.300"><path d="M.500 7l6-6 6 6" /></svg>
        <span v-fit="38">9:30 SA</span>
        <svg class="note" width="16" height="16"><path d="M0 0h16v13H11l-3 3-3-3H0z" fill="#fff" /><path d="M3 3.500h10M3 6.500h10M3 9.500h6" stroke="#111" /></svg>
      </div>
    </footer>
  </div>
</template>

<style>
html, body { margin: 0; overflow: hidden; background: #a9a9a9; }
</style>
<style scoped>
.app { width: 1366px; height: 768px; display: flex; flex-direction: column; font: 11.500px/16px "Open Sans", "Noto Sans", sans-serif; color: #000; white-space: nowrap; overflow: hidden; background: #a9a9a9; }
.app * { box-sizing: border-box; }
.app span, .phead b { display: inline-block; flex: none; }
.defs { position: absolute; }
u { text-underline-offset: 2px; text-decoration-thickness: 1px; }
.icon { width: 16px; height: 16px; flex: none; display: block; }
.title { height: 23px; flex: none; background: #fff; display: flex; align-items: center; }
.logo { width: 16px; height: 16px; margin: 0 5px 0 2px; color: #171410; flex: none; }
.wincontrols { margin: -4px 0 0 490px; flex: none; }
.bar { display: flex; align-items: center; flex: none; background: #f0f0f0; }
.menu { height: 27px; padding-bottom: 1px; }
.tools { height: 25px; background: #f2f2f2; }
.slot { flex: none; display: flex; align-items: center; height: 100%; }
.mark { display: block; flex: none; }
.sep { width: 1px; height: 21px; background: #a0a0a0; }
.grip { width: 3px; height: 15px; background: repeating-linear-gradient(#aaa 0 1px, #f0f0f0 1px 2px); }
.tri, .dd { border: 3px solid transparent; border-top: 3px solid #000; border-bottom: 0; width: 0; height: 0; }
.tri.big { border-width: 4px 4px 0; }
.dd.off { border-top-color: #999; }
.combo { height: 19px; background: #fff; display: flex; align-items: center; padding-left: 2px; }
.clip { flex: 1 1 0 !important; overflow: hidden; height: 17px; }
.arrow { width: 11px; height: 18px; background: #f0f0f0; display: flex; align-items: center; justify-content: center; flex: none; }
.biga { font: bold 17px/16px "Liberation Serif", serif; color: #a5a5a5; padding-left: 2px; }
.work { height: 639px; flex: none; display: flex; padding: 3px 3px 3px 3px; border-bottom: 1px solid #666; }
.panel { width: 277px; height: 633px; background: #dedede; display: flex; flex-direction: column; }
.phead { height: 23px; background: linear-gradient(#b7d3e7, #a5c6dd); border-bottom: 1px solid #9bc2dd; display: flex; align-items: center; justify-content: space-between; padding: 0 2px 0 5px; }
.pbody { height: 590px; padding: 10px 11px 0 10px; }
.field-row { display: flex; justify-content: space-between; align-items: center; }
.second { margin-top: 7px; }
.field { width: 183px; height: 25px; border: 1px solid #929292; background: #f4f4f4; display: flex; align-items: center; justify-content: space-between; padding: 0 6px 0 5px; }
.second .field { padding-bottom: 1px; }
.btn { width: 68px; height: 23px; border: 1px solid #adadad; background: #e1e1e1; display: flex; align-items: center; justify-content: center; }
.radios { display: flex; align-items: center; margin-top: 8px; height: 23px; }
.radio { width: 13px; height: 13px; border: 1px solid #222; border-radius: 50%; background: #fff; margin-right: 3px; flex: none; }
.radio.on { background: radial-gradient(#333 0 3.500px, #fff 4.300px); }
.r2 { margin-left: 17px; }
.ib { width: 26px; margin-left: 69px; }
.ib2 { width: 38px; margin-left: 4px; gap: 3px; }
.vline { width: 1px; height: 17px; background: #aaa; }
.tree { margin: 12px 0 0 1px; width: 255px; height: 470px; background: #fff; border: 1px solid #8d8d8d; padding: 4px 0 0 5px; }
.node { height: 16px; width: 244px; display: flex; align-items: center; }
.l1 { padding-left: 12px; }
.l2 { padding-left: 35px; }
.exp { width: 11px; height: 9px; display: flex; flex: none; }
.cell { flex: 1; height: 16px; border-bottom: 1px solid #dcdcdc; padding: 1px 0 0 3px; display: flex; align-items: flex-start; }
.c1, .c2 { height: 16px; border-left: 1px solid #dcdcdc; border-bottom: 1px solid #dcdcdc; flex: none; }
.c1 { width: 18px; }
.c2 { width: 18px; border-right: 1px solid #dcdcdc; }
.bold { font-weight: 700; font-size: 11px; }
.project .cell, .project .c1, .project .c2 { background: #9ab3d0; border-color: #9ab3d0; }
.picked .cell, .picked .c1, .picked .c2 { background: #0078d7; border-color: #0078d7; color: #fff; }
.ptabs { height: 20px; background: #efefef; display: flex; }
.btab { height: 18px; margin-top: 1px; flex: none; background: #fff; border-right: 1px solid #aaa; border-bottom: 1px solid #aaa; border-radius: 0 0 3px 3px; display: flex; align-items: center; justify-content: center; color: #666; }
.btab.on { background: #dedede; color: #000; }
.splitter { width: 3px; height: 633px; padding-top: 303px; }
.dots { display: block; width: 1px; height: 25px; margin-left: 1px; background: repeating-linear-gradient(#fff 0 1px, #a9a9a9 1px 2px); }
.docs { width: 1052px; height: 633px; display: flex; flex-direction: column; }
.dtabs { height: 27px; border-bottom: 3px solid #dedede; display: flex; flex: none; }
.dtab { height: 24px; display: flex; align-items: center; color: #f4f4f4; flex: none; }
.dtab.on { background: #dedede; color: #000; }
.canvas { height: 586px; position: relative; flex: none; background: linear-gradient(#d0c5c2, #988380); }
.board { display: block; }
.silk text { font: 11.500px "DejaVu Sans Mono", monospace; fill: #f1f5ec; stroke: #f1f5ec; stroke-width: .15px; }
.silk .thin { font-size: 8px; }
.hud { position: absolute; left: 0; top: 0; width: 206px; height: 70px; border: 2px solid #303030; background: linear-gradient(#333, #466d89); font-family: "Liberation Sans", sans-serif; font-weight: 700; color: #dcdcb4; padding-top: 3px; }
.hline { display: flex; height: 15px; font-size: 14px; }
.hlayer { font-size: 17px; line-height: 17px; color: #ff0; padding: 1px 0 0 4px; }
.hsnap { font-size: 11px; line-height: 15px; padding-left: 4px; }
.layers { height: 20px; flex: none; background: #efefef; border-top: 1px solid #777; display: flex; }
.ls { width: 46px; height: 14px; margin: 2px 3px 0; border: 1px solid #777; display: flex; align-items: center; gap: 5px; color: #777; font-size: 11px; }
.ls i { width: 25px; height: 12px; background: red; }
.layer { margin-top: 0; height: 18px; color: #000; justify-content: flex-start; padding-left: 6px; border-right-color: #bbb; }
.layer.on { font-weight: 700; font-size: 11px; }
.swatch { width: 10px; height: 10px; border: 1px solid #999; flex: none; }
.mask { height: 19px; border: 1px solid #c9c9c9; display: flex; align-items: center; justify-content: center; color: #666; flex: none; padding-bottom: 2px; }
.mask.first { width: 33px; margin-left: auto; padding-bottom: 0; }
.side { width: 25px; height: 633px; margin-left: 3px; background: #f0f0f0; padding: 1px 3px; }
.fav { width: 19px; height: 56px; border: 1px solid #ccc; background: #fbfbfb; writing-mode: vertical-rl; display: flex; align-items: center; padding-top: 5px; color: #666; }
.status { height: 24px; flex: none; background: #f0f0f0; display: flex; align-items: center; }
.status .sep { height: 17px; }
.sbtn { height: 18px; border: 1px solid #ccc; border-right-width: 0; background: #f8f8f8; color: #666; display: flex; align-items: center; justify-content: center; flex: none; margin-top: 1px; }
.sbtn:nth-last-child(2) { border-right-width: 1px; }
.more { width: 18px; margin-left: 4px; border-right-width: 1px; }
.taskbar { height: 30px; flex: none; background: #0e0e16; display: flex; }
.task { width: 37px; height: 30px; display: flex; align-items: center; justify-content: center; flex: none; }
.task:nth-child(-n+3) { width: 36px; }
.task:nth-child(3) { width: 38px; padding-right: 2px; }
.task.run { border-bottom: 2px solid #76b9ed; width: 28px; margin: 0 4px 0 3px; padding-top: 2px; }
.task.active { background: #3c3d42; width: 36px; margin: 0 5px 0 1px; color: #050505; }
.task.run:nth-child(16) { margin-left: 0; }
.keycap text { font: bold 7px "Liberation Sans", sans-serif; fill: #d52c2c; }
.tray { margin-left: auto; width: 162px; display: flex; align-items: center; color: #fff; border-right: 1px solid #77777b; margin-right: 4px; padding-left: 5px; }
.chev { margin: 0 15px 0 16px; }
.note { margin-left: 23px; }
</style>
